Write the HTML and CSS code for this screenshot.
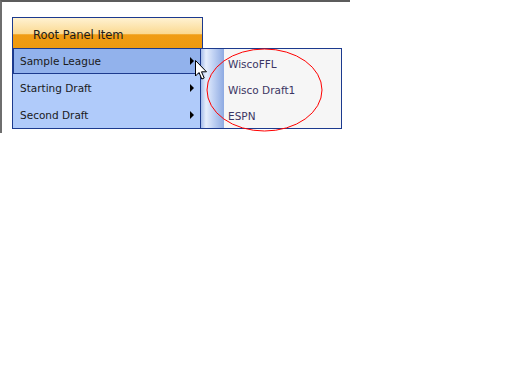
FILE: index.html
```html
<!DOCTYPE html>
<html lang="en">
<head>
    <meta charset="UTF-8">
    <title>Panel Menu</title>
    <link rel="stylesheet" href="styles.css">
</head>
<body>
    <div class="frame">
        <!-- panel bar -->
        <div class="panel">
            <div class="panel-header">Root Panel Item</div>
            <div class="panel-item selected">
                <span>Sample League</span>
                <span class="arrow"></span>
            </div>
            <div class="panel-item">
                <span>Starting Draft</span>
                <span class="arrow"></span>
            </div>
            <div class="panel-item">
                <span>Second Draft</span>
                <span class="arrow"></span>
            </div>

            <!-- flyout -->
            <div class="submenu">
                <div class="submenu-item">WiscoFFL</div>
                <div class="submenu-item">Wisco Draft1</div>
                <div class="submenu-item">ESPN</div>
            </div>

            <svg class="circle" width="117" height="84" viewBox="0 0 117 84">
                <ellipse cx="58.5" cy="42" rx="57.5" ry="41" fill="none" stroke="#ff0000" stroke-width="1"/>
            </svg>

            <svg class="cursor" width="13" height="20" viewBox="0 0 13 20">
                <path d="M0.5 0.5 L0.5 16 L4 12.5 L6.8 19 L9.2 18 L6.5 11.8 L11.5 11.8 Z" fill="#fff" stroke="#000" stroke-width="1" stroke-linejoin="miter"/>
            </svg>
        </div>
    </div>
</body>
</html>
```

FILE: styles.css
```css
body {
    margin: 0;
    background-color: #ffffff;
    font-family: 'DejaVu Sans', Verdana, sans-serif;
}

.frame {
    width: 338px;
    height: 116px;
    padding: 15px 0 0 10px;
    border-top: 2px solid #5c5c5c;
    border-left: 2px solid #6e6e6e;
}

/* panel bar */
.panel {
    position: relative;
    width: 189px;
    border: 1px solid #1c3a8e;
    background-color: #b0cbfa;
}

.panel-header {
    height: 27px;
    padding: 3px 0 0 20px;
    display: flex;
    align-items: center;
    font-size: 11.5px;
    color: #1a1a1a;
    background: linear-gradient(#fff2d2 0%, #fbd991 52%, #f09c14 56%, #ef9a0e 100%);
}

.panel-item {
    height: 27px;
    padding: 0 8px 0 7px;
    display: flex;
    align-items: center;
    justify-content: space-between;
    font-size: 10.5px;
    color: #1a1a1a;
}

.panel-item:nth-child(2) {
    height: 26px;
}

.panel-item.selected {
    background-color: #92b2ec;
    box-shadow: inset 0 0 0 1px #1c3a8e;
}

.arrow {
    width: 0;
    height: 0;
    border-top: 4px solid transparent;
    border-bottom: 4px solid transparent;
    border-left: 4px solid #000000;
}

/* flyout */
.submenu {
    position: absolute;
    left: 187px;
    top: 30px;
    width: 113px;
    height: 77px;
    padding: 2px 0 0 27px;
    border: 1px solid #1c3a8e;
    background: linear-gradient(to right, #a6bdea 0, #e6eefc 5px, #c2d3f4 12px, #8eaae2 23px, #f6f6f6 23px);
}

.submenu-item {
    height: 26px;
    display: flex;
    align-items: center;
    font-size: 10.5px;
    color: #3b3563;
}

.circle {
    position: absolute;
    left: 193px;
    top: 30px;
}

.cursor {
    position: absolute;
    left: 182px;
    top: 42px;
}
```
